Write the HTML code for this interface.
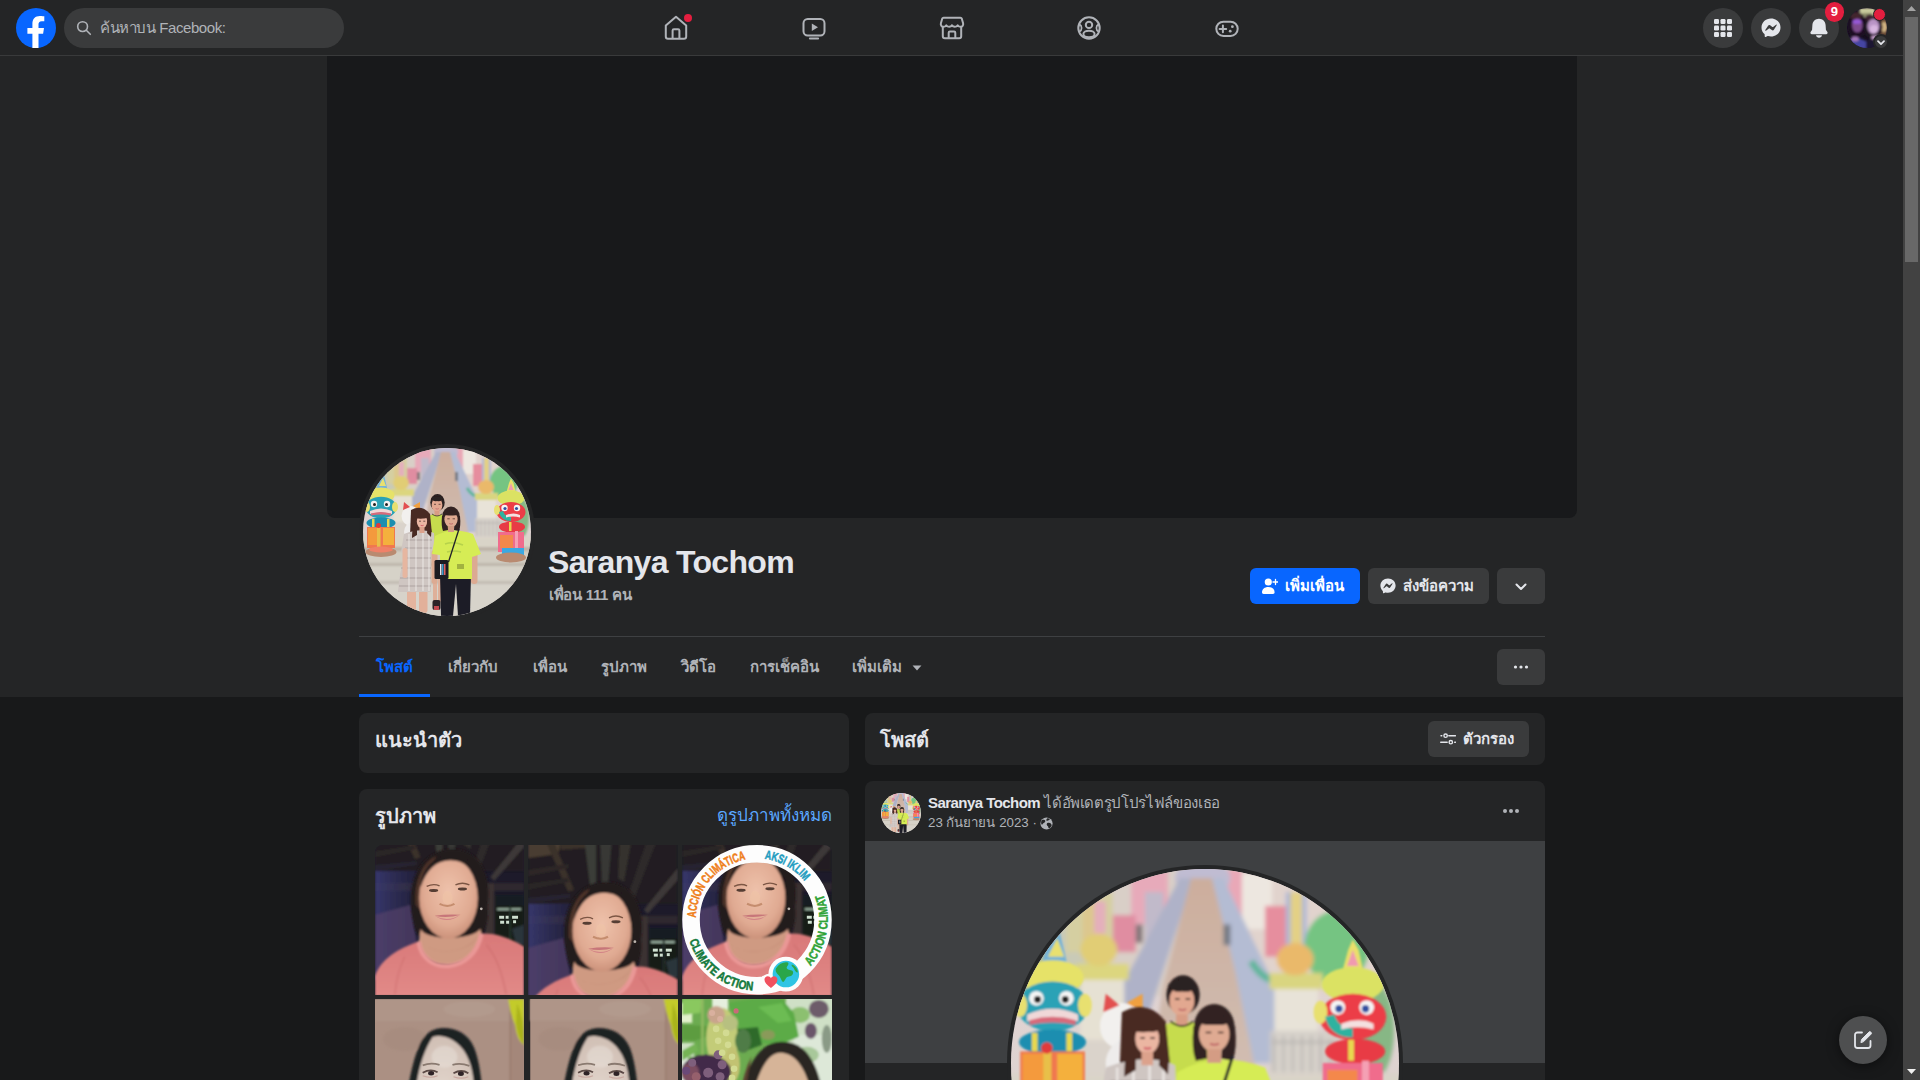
<!DOCTYPE html>
<html lang="th">
<head>
<meta charset="utf-8">
<title>Saranya Tochom | Facebook</title>
<style>
*{box-sizing:border-box;margin:0;padding:0}
html,body{width:1920px;height:1080px;overflow:hidden;background:#18191a}
body{font-family:"Liberation Sans",sans-serif;color:#e4e6eb;position:relative;font-size:15px}
.abs{position:absolute}
svg{display:block}
/* ---------- top bar ---------- */
#topbar{position:absolute;left:0;top:0;width:1903px;height:56px;background:#242526;border-bottom:1px solid #393a3b;z-index:5}
#logo{position:absolute;left:16px;top:8px;width:40px;height:40px}
#search{position:absolute;left:64px;top:8px;width:280px;height:40px;border-radius:20px;background:#3a3b3c}
#search svg{position:absolute;left:12px;top:12px}
#search span{position:absolute;left:36px;top:0;line-height:40px;font-size:15px;letter-spacing:-.42px;color:#b0b3b8;white-space:nowrap}
.navic{position:absolute;top:0;height:56px;width:130px}
.navic svg{position:absolute;left:50%;top:50%;transform:translate(-50%,-50%)}
.rbtn{position:absolute;top:8px;width:40px;height:40px;border-radius:50%;background:#3a3b3c}
.rbtn svg{position:absolute;left:10px;top:10px}
.badge{position:absolute;background:#e41e3f;border-radius:50%}
/* ---------- scrollbar ---------- */
#sb{position:absolute;left:1903px;top:0;width:17px;height:1080px;background:#424242;z-index:9}
#sb .thumb{position:absolute;left:2px;top:17px;width:13px;height:245px;background:#686868}
/* ---------- profile header ---------- */
#phead{position:absolute;left:0;top:56px;width:1903px;height:641px;background:#242526}
#cover{position:absolute;left:327px;top:0;width:1250px;height:462px;background:#18191b;border-radius:0 0 8px 8px}
#pp{position:absolute;left:359px;top:388px;width:176px;height:176px;border-radius:50%;background:#242526}
#pp svg{position:absolute;left:4px;top:4px;width:168px;height:168px;border-radius:50%}
#pname{position:absolute;left:548px;top:487px;font-size:32px;font-weight:700;line-height:38px;letter-spacing:-.68px;color:#e4e6eb;white-space:nowrap}
#pfriends{position:absolute;left:549px;top:529px;letter-spacing:-.3px;font-size:15px;font-weight:700;line-height:20px;color:#b0b3b8;white-space:nowrap}
.btn{position:absolute;height:36px;border-radius:6px;background:#3a3b3c;color:#e4e6eb;font-size:15px;font-weight:700;line-height:36px;white-space:nowrap}
.btn.blue{background:#0866ff;color:#fff}
#hr1{position:absolute;left:359px;top:580px;width:1186px;height:1px;background:#3e4042}
.tab{position:absolute;top:581px;height:60px;line-height:60px;font-size:15px;font-weight:700;color:#b0b3b8;white-space:nowrap;text-align:center}
.tab.on{color:#0866ff}
#tabline{position:absolute;left:359px;top:638px;width:71px;height:3px;background:#0866ff}
/* ---------- cards ---------- */
.card{position:absolute;background:#242526;border-radius:8px;overflow:hidden}
.h2{position:absolute;font-size:20px;font-weight:700;line-height:24px;color:#e4e6eb;white-space:nowrap}
.ph{position:absolute;width:150px;height:149.5px;overflow:hidden}
.ph svg{width:100%;height:100%}
</style>
</head>
<body>
<svg width="0" height="0" style="position:absolute">
<defs>
  <filter id="bl1" x="-5%" y="-5%" width="110%" height="110%"><feGaussianBlur stdDeviation="0.9"/></filter>
  <filter id="bl2" x="-5%" y="-5%" width="110%" height="110%"><feGaussianBlur stdDeviation="0.45"/></filter>
  <linearGradient id="gsky" x1="0" y1="0" x2="0" y2="1"><stop offset="0" stop-color="#e6d6d8"/><stop offset="1" stop-color="#d6cfc8"/></linearGradient>
  <linearGradient id="gpath" x1="0" y1="0" x2="0" y2="1"><stop offset="0" stop-color="#c7a48e"/><stop offset="1" stop-color="#cdb8aa"/></linearGradient>
  <symbol id="grp" viewBox="0 0 168 168">
    <rect width="168" height="168" fill="url(#gsky)"/>
    <g filter="url(#bl1)">
      <!-- far background colour patches -->
      <rect x="-5" y="-5" width="80" height="60" fill="#d8cfc4"/>
      <rect x="88" y="-5" width="90" height="60" fill="#e2d4cc"/>
      <rect x="0" y="20" width="40" height="40" fill="#c3c8b0"/>
      <rect x="52" y="0" width="16" height="24" fill="#ea9fb4"/>
      <rect x="44" y="20" width="10" height="16" fill="#e07a94"/>
      <rect x="24" y="10" width="20" height="26" fill="#d3cf94"/>
      <rect x="31" y="12" width="7" height="22" fill="#dcc47c"/><rect x="36" y="14" width="5" height="14" fill="#e6a6b6"/><rect x="58" y="10" width="8" height="30" fill="#b9b4c8"/>
      <rect x="99" y="2" width="14" height="24" fill="#f1ede4"/>
      <rect x="90" y="0" width="10" height="22" fill="#ec9db0"/>
      <rect x="110" y="16" width="10" height="22" fill="#e87c90"/>
      <rect x="119" y="10" width="9" height="32" fill="#9fb0d8"/>
      <rect x="121" y="10" width="5" height="32" fill="#e4d070"/>
      <ellipse cx="141" cy="34" rx="14" ry="16" fill="#56c06c"/>
      <ellipse cx="156" cy="70" rx="10" ry="22" fill="#6fb070"/>
      <ellipse cx="10" cy="40" rx="12" ry="14" fill="#9fb890"/>
      <ellipse cx="83" cy="4" rx="12" ry="8" fill="#b8b6d2"/>
      <!-- bridge -->
      <polygon points="73,4 79,4 60,62 44,58" fill="#a2aac6"/>
      <polygon points="86,4 92,4 114,50 116,84 104,84 96,44" fill="#a8b6d4"/>
      <polygon points="78,4 87,4 97,44 106,88 60,88 66,50" fill="url(#gpath)"/>
      <path d="M104 40 q6 10 14 8" stroke="#3cae8c" stroke-width="3" fill="none"/>
      <rect x="92" y="24" width="3" height="9" fill="#58606e"/>
      <rect x="54" y="24" width="3" height="8" fill="#6a5a60"/>
      <!-- pillars -->
      <rect x="30" y="42" width="19" height="48" fill="#e8e6d4"/>
      <rect x="28" y="41" width="23" height="7" fill="#dcd868"/>
      <ellipse cx="38" cy="35" rx="8" ry="7" fill="#e2cc5c"/>
      <rect x="114" y="46" width="19" height="44" fill="#ebe8da"/>
      <rect x="112" y="45" width="23" height="7" fill="#d8d66a"/>
      <ellipse cx="123" cy="39" rx="8" ry="7" fill="#eeb24e"/>
      <!-- fences -->
      <rect x="112" y="70" width="30" height="20" fill="#cfcdc4" opacity=".8"/>
      <rect x="30" y="74" width="18" height="16" fill="#d4d0c6" opacity=".8"/>
      <path d="M114 72v18M118 72v18M122 72v18M126 72v18M130 72v18M134 72v18M138 74v16M113 75h28" stroke="#a9a8a4" stroke-width=".8" fill="none"/>
      <!-- ground -->
      <rect x="-5" y="88" width="180" height="85" fill="#d9d4c8"/>
      <rect x="-5" y="99" width="180" height="4" fill="#bdb4a8"/>
      <rect x="-5" y="103" width="180" height="12" fill="#d2cdc2"/>
      <rect x="-5" y="115" width="180" height="3" fill="#beb7ac"/>
      <rect x="-5" y="118" width="180" height="15" fill="#d6d2c8"/>
      <rect x="-5" y="133" width="180" height="3" fill="#c2bcb2"/>
      <rect x="-5" y="136" width="180" height="40" fill="#d7d3ca"/>
      <rect x="-5" y="-5" width="180" height="95" fill="#ddd0d2" opacity=".22"/>
    </g>
    <g filter="url(#bl2)">
      <!-- cat -->
      <ellipse cx="48" cy="68" rx="9.5" ry="10" fill="#f2f0ee"/>
      <ellipse cx="50" cy="84" rx="9" ry="10" fill="#eeeceb"/>
      <polygon points="40,62 41,54 47,59" fill="#e25050"/>
      <polygon points="50,58 57,54 57,62" fill="#f0a040"/>
      <!-- left giant -->
      <polygon points="13,44 16,30 21,27 25,44" fill="#74b2d8"/>
      <polygon points="16,38 20,30 23,38" fill="#e8e070"/>
      <ellipse cx="18" cy="47" rx="13.5" ry="7.5" fill="#e6e268"/>
      <ellipse cx="18" cy="59.5" rx="15.5" ry="10.8" fill="#2aa2b6"/>
      <ellipse cx="4" cy="59" rx="3" ry="5" fill="#e8e070"/>
      <ellipse cx="32" cy="59" rx="3" ry="5" fill="#e8e070"/>
      <circle cx="11" cy="56" r="3.2" fill="#f4f4f4"/><circle cx="24" cy="56" r="3.2" fill="#f4f4f4"/>
      <circle cx="11.5" cy="56.5" r="1.5" fill="#222"/><circle cx="23.5" cy="56.5" r="1.5" fill="#222"/>
      <path d="M7 63 q11 -5 22 0 l0 3 q-11 -3 -22 0z" fill="#f0d8d8"/>
      <path d="M8 65.5 q10 -3 20 0 l0 2 q-10 -2 -20 0z" fill="#d86a7a"/>
      <ellipse cx="18" cy="75" rx="14.5" ry="5.5" fill="#1f8eb0"/>
      <rect x="9" y="71" width="2.5" height="8" fill="#e8d850"/><rect x="24" y="71" width="2.5" height="8" fill="#e8d850"/>
      <rect x="4" y="79" width="28" height="21" fill="#f07850"/>
      <rect x="5" y="80" width="11" height="17" fill="#f49a3c"/><rect x="20" y="80" width="11" height="17" fill="#f4b03c"/>
      <rect x="14" y="79" width="3.5" height="22" fill="#e8c048"/>
      <circle cx="15.5" cy="77.5" r="2.5" fill="#e23a3a"/>
      <ellipse cx="18" cy="104" rx="15.5" ry="5" fill="#b98a70"/>
      <ellipse cx="18" cy="101.5" rx="12" ry="3" fill="#f08068"/>
      <!-- right giant -->
      <polygon points="143,46 146,35 148,30.5 150.5,35 153,46" fill="#eadf6a"/>
      <polygon points="145.5,42 148,35 150.5,42" fill="#f09ab0"/>
      <ellipse cx="148" cy="50" rx="13.5" ry="7.5" fill="#dbe264"/>
      <ellipse cx="148" cy="64" rx="14.5" ry="10" fill="#ec3e46"/>
      <ellipse cx="134" cy="62" rx="3" ry="5" fill="#e8e070"/>
      <circle cx="141.5" cy="60" r="3.2" fill="#f4f4f4"/><circle cx="154" cy="60" r="3.2" fill="#f4f4f4"/>
      <circle cx="142" cy="60.5" r="1.6" fill="#3050a0"/><circle cx="153.5" cy="60.5" r="1.6" fill="#3050a0"/>
      <path d="M136 64 q2 9 12 9 l0 -4 q-6 0 -8 -6z" fill="#2fb2a0"/>
      <path d="M143 67 q8 -3 14 0 l0 2.5 q-7 -2 -14 0z" fill="#f4e0e0"/>
      <ellipse cx="149" cy="79" rx="13" ry="5.5" fill="#e83a44"/>
      <rect x="146" y="74" width="2.5" height="9" fill="#e8d850"/>
      <rect x="135" y="84" width="26" height="20" fill="#f06c8c"/>
      <rect x="137" y="87" width="13" height="13" fill="#f4884c"/>
      <rect x="152" y="83" width="3" height="24" fill="#f4a0b4"/>
      <rect x="139" y="100" width="22" height="7" fill="#3aa8e2"/>
      <ellipse cx="148" cy="109.5" rx="15" ry="5" fill="#b98a70"/>
    </g>
    <g filter="url(#bl2)">
      <!-- back girl -->
      <rect x="70" y="128" width="4" height="26" fill="#deb09a"/><rect x="75" y="128" width="4" height="26" fill="#deb09a"/>
      <rect x="69.5" y="152" width="8" height="10" rx="2" fill="#2a2226"/><rect x="71" y="158" width="5" height="4" fill="#c04a50"/>
      <path d="M62 70 q12 -8 24 0 l2 22 l-24 4z" fill="#c6dc4e"/>
      <ellipse cx="74.5" cy="54.5" rx="7.2" ry="8.5" fill="#2c2020"/>
      <ellipse cx="74" cy="57" rx="5.4" ry="6.6" fill="#e2a890"/>
      <path d="M68 50 q6 -4 12 0 q-1 4 -6 3 q-4 1 -6 -3z" fill="#2c2020"/>
      <rect x="71.5" y="63" width="5" height="5" fill="#d89c84"/>
      <path d="M69 66 q5 4 10 0" stroke="#222" stroke-width=".7" fill="none"/>
      <path d="M71 56.3h2M75.6 56.3h2" stroke="#3a2622" stroke-width=".7"/><path d="M72.6 60.6q1.6 1 3.2 0" stroke="#c06868" stroke-width=".8" fill="none"/>
      <!-- left girl -->
      <rect x="44" y="138" width="9" height="27" rx="3" fill="#e4b49e"/><rect x="56" y="138" width="8.5" height="27" rx="3" fill="#e2b09a"/>
      <path d="M48 62 q11 -6 19 4 l2 20 l-22 2z" fill="#4a2a24"/>
      <path d="M41 86 q18 -7 30 -1 l1 18 l-4 1 l0 40 l-33 0 q1 -20 8 -38 l-5 -2z" fill="#cfc6c2"/>
      <path d="M43 92 h26 M42 100 h27 M40 110 h28 M38 120 h30 M37 130 h31 M36 138 h32" stroke="#8a807e" stroke-width=".9" opacity=".55"/>
      <path d="M46 86 v57 M53 85 v58 M60 85 v58 M66 86 v57" stroke="#f2eeec" stroke-width="1.2" opacity=".7"/>
      <rect x="39.5" y="100" width="5" height="30" rx="2.5" fill="#e6b6a0"/>
      <ellipse cx="59" cy="73.5" rx="5.2" ry="6.6" fill="#ebb6a2"/>
      <path d="M53 70 q5 -7 12 -2 q-1 3 -5 2.5 q-4 .5 -7 -.5z" fill="#4a2a24"/>
      <path d="M50 76 q-1 10 -1 14 l5 -3 q0 -6 0 -12z M66 72 q3 8 2 17 l-4 -4 q1 -6 -0 -12z" fill="#4a2a24"/>
      <rect x="56.5" y="79" width="5" height="6" fill="#dca28c"/>
      <path d="M56 73.2h2M60.3 73.2h2" stroke="#3a2622" stroke-width=".7"/><path d="M57.6 77.3q1.5 .9 3 0" stroke="#d05a66" stroke-width=".9" fill="none"/>
      <!-- right woman -->
      <path d="M77 126 h31 l-1 42 h-12 l-2 -32 l-3 32 h-12z" fill="#1c1c26"/>
      <rect x="68.5" y="102" width="6" height="34" rx="3" fill="#dcaa92"/><rect x="108" y="102" width="6.5" height="34" rx="3" fill="#dcaa92"/>
      <path d="M72 88 q17 -10 38 -2 l8 20 l-9 3 l0 22 l-32 0 l0 -24 l-8 -1z" fill="#d6ec54"/>
      <path d="M82 96 q8 -3 18 1 M84 104 q7 -2 14 0" stroke="#a8c848" stroke-width="1.5" fill="none" opacity=".7"/>
      <ellipse cx="88" cy="68.5" rx="8.8" ry="10" fill="#302422"/>
      <path d="M79 68 q-1 10 1 15 l5 -1 l-1 -14z M97 68 q1 10 -1 15 l-5 -1 l1 -14z" fill="#302422"/>
      <ellipse cx="88" cy="71.5" rx="6.6" ry="7.8" fill="#dfaa92"/>
      <path d="M81 66 q7 -7 14 0 q-2 2 -7 1.5 q-5 .5 -7 -1.5z" fill="#302422"/>
      <rect x="85" y="78" width="6" height="6" fill="#d49c84"/>
      <path d="M84.3 70.8h2.4M89.6 70.8h2.4" stroke="#3a2622" stroke-width=".7"/><path d="M86.2 75.6q1.9 1 3.8 0" stroke="#c06868" stroke-width=".9" fill="none"/>
      <path d="M96 81 L85.5 114" stroke="#20202a" stroke-width="1.3"/>
      <rect x="71.5" y="112" width="14" height="19" rx="1.5" fill="#1a1a22"/>
      <rect x="77" y="116" width="1.5" height="11" fill="#e8e8f0"/><rect x="79" y="116" width="1.5" height="11" fill="#40a0d0"/><rect x="81" y="116" width="1.5" height="11" fill="#e06060"/>
      <rect x="94" y="116" width="7" height="5" fill="#8a9a38" opacity=".7"/>
    </g>
  </symbol>
</defs>
</svg>


<svg width="0" height="0" style="position:absolute">
<defs>
  <filter id="bl3" x="-5%" y="-5%" width="110%" height="110%"><feGaussianBlur stdDeviation="1.1"/></filter>
  <filter id="bl5" x="-10%" y="-10%" width="120%" height="120%"><feGaussianBlur stdDeviation="0.9"/></filter>
  <filter id="bl4" x="-5%" y="-5%" width="110%" height="110%"><feGaussianBlur stdDeviation="2.2"/></filter>
  <linearGradient id="ghaze" x1="0" y1="0" x2="1" y2="0"><stop offset="0" stop-color="#3a3a72" stop-opacity=".9"/><stop offset="1" stop-color="#2c2c5c" stop-opacity="0"/></linearGradient>
  <radialGradient id="gface" cx=".5" cy=".42" r=".6"><stop offset="0" stop-color="#eec2ab"/><stop offset=".7" stop-color="#e0aa92"/><stop offset="1" stop-color="#c98f78"/></radialGradient>
  <radialGradient id="gface2" cx=".5" cy=".6" r=".7"><stop offset="0" stop-color="#e6dad1"/><stop offset="1" stop-color="#cdbbb0"/></radialGradient>
  <linearGradient id="gshirt" x1="0" y1="0" x2="0" y2="1"><stop offset="0" stop-color="#d87878"/><stop offset="1" stop-color="#e28a88"/></linearGradient>

  <!-- woman in pink shirt under dark wooden roof (canvas x:0..15, y:-40..15) -->
  <g id="wpink">
    <rect x="0" y="-40" width="150" height="190" fill="#1d1a2a"/>
    <g filter="url(#bl3)">
      <rect x="0" y="-40" width="150" height="66" fill="#231f20"/>
      <polygon points="0,-40 34,-40 30,-24 0,-20" fill="#4a3c30"/>
      <polygon points="34,-40 60,-40 58,-30 32,-28" fill="#3a302a"/>
      <polygon points="56,-40 68,-40 68,6 62,8" fill="#3b3d38"/>
      <polygon points="72,-40 84,-40 80,8 74,6" fill="#373934"/>
      <polygon points="92,-40 104,-40 96,4 90,0" fill="#34322e"/>
      <polygon points="16,-40 24,-40 46,12 40,14" fill="#3a302c"/>
      <polygon points="120,-40 130,-40 106,22 100,18" fill="#2f2b2a"/>
      <polygon points="150,-10 150,2 120,36 116,32" fill="#3c3838"/>
      <polygon points="0,-8 40,-14 40,-10 0,-2" fill="#2e2828"/>
      <polygon points="0,6 40,0 40,4 0,12" fill="#2a2526"/>
      <polygon points="0,20 42,16 42,20 0,26" fill="#272430"/>
      <rect x="0" y="38" width="150" height="8" fill="#332c30" opacity=".8"/>
      <rect x="111" y="38" width="9" height="80" fill="#3a3331"/>
      <rect x="0" y="26" width="62" height="110" fill="url(#ghaze)"/>
      <polygon points="0,70 36,60 44,112 0,134" fill="#54426a" opacity=".7"/>
      <rect x="121" y="50" width="29" height="55" fill="#151a20"/>
      <rect x="121" y="61" width="29" height="42" fill="#131b18"/>
      <rect x="123" y="63.5" width="24" height="1.8" fill="#a9c2b0"/>
      <rect x="135" y="61" width="2" height="42" fill="#26302c"/>
      <polygon points="138,84 150,80 150,100 142,100" fill="#2a343a"/>
    </g>
    <g fill="#cfe0d0" filter="url(#bl2)"><rect x="125" y="71" width="5" height="3"/><rect x="131.5" y="71" width="3" height="3"/><rect x="138" y="71" width="6" height="3"/><rect x="126" y="76" width="4" height="3"/><rect x="132" y="76" width="3" height="3"/><rect x="139" y="75.5" width="3" height="3"/></g>
    <g filter="url(#bl3)">
      <path d="M38 74 C30 34 48 4 78 4 C106 4 118 30 113 62 C115 78 110 90 102 94 L48 94 C40 90 40 82 38 74z" fill="#241a1b"/>
      <path d="M41 60 C39 36 49 15 62 11 C52 24 49 44 49 70z" fill="#5a3c30" opacity=".8"/>
      <path d="M46 84 C50 96 98 96 106 84 L108 92 C100 128 48 130 44 98z" fill="#cf9a82"/>
      <ellipse cx="74" cy="53" rx="29.5" ry="41" fill="url(#gface)"/>
      <path d="M46 42 C48 20 62 9 80 10 C94 11 103 22 104 38 C98 24 90 15 76 15 C62 15 52 24 46 42z" fill="#241a1b"/>
      <path d="M46 96 C56 112 94 110 104 90 C100 100 88 106 72 107 C58 107 50 102 46 96z" fill="#b8826c" opacity=".7"/>
    </g>
    <g filter="url(#bl2)" opacity=".85">
      <path d="M52 41.5 q7 -3.5 13 -.5" stroke="#6a4636" stroke-width="1.4" fill="none"/>
      <path d="M81 40 q7 -3.5 14 0" stroke="#6a4636" stroke-width="1.4" fill="none"/>
      <ellipse cx="59" cy="45.5" rx="4.6" ry="1.5" fill="#3e2a24"/>
      <ellipse cx="88" cy="44" rx="4.6" ry="1.5" fill="#3e2a24"/>
      <path d="M65 59 q8 4 15 0" stroke="#bf8666" stroke-width="2.2" fill="none"/>
      <ellipse cx="73" cy="53" rx="5" ry="7" fill="#efc4a6" opacity=".7"/>
      <path d="M60 71 q13 7 26 -1 q-13 10 -26 1z" fill="#d07c84"/>
      <path d="M60 71 q13 -2 26 -1 q-13 4 -26 1z" fill="#c26c74"/>
      <circle cx="107" cy="64" r="1.4" fill="#d8d0c8"/>
    </g>
    <g filter="url(#bl3)">
      <path d="M0 132 C6 114 24 104 44 97 C48 132 100 130 107 89 C124 88 140 96 150 102 V152 H0z" fill="url(#gshirt)"/>
      <path d="M44 97 C48 132 100 130 107 89" stroke="#ea9896" stroke-width="4.5" fill="none"/>
      <path d="M112 100 q14 16 20 50" stroke="#cf7070" stroke-width="2" fill="none" opacity=".6"/>
      <path d="M30 112 q-8 16 -10 38" stroke="#cf7070" stroke-width="2" fill="none" opacity=".5"/>
    </g>
  </g>

  <!-- pale woman with black hair in front of brownish wall (canvas 150x150, only top 82 visible) -->
  <g id="wpale">
    <rect width="150" height="150" fill="#ab9083"/>
    <g filter="url(#bl3)">
      <rect x="0" y="0" width="150" height="22" fill="#af9588"/>
      <ellipse cx="95" cy="10" rx="26" ry="8" fill="#b49c90" opacity=".7"/>
      <ellipse cx="30" cy="40" rx="22" ry="12" fill="#a58a7e" opacity=".7"/>
      <rect x="135.5" y="0" width="1.5" height="150" fill="#98796c"/>
      <rect x="137" y="0" width="14" height="150" fill="#a4877a"/>
      <path d="M134 0 h16 v46 q-7 -4 -9 -20 q-5 -12 -7 -26z" fill="#c3cb2c"/>
      <path d="M143 4 q6 14 7 30 v12 q-6 -6 -8 -22z" fill="#aab31e"/>
      <path d="M29 150 C29 112 34 72 44 48 C50 33 60 29 69 29 C83 29 94 36 99 47 C107 64 110 100 110 150z" fill="#1f2023"/>
      <path d="M37 150 C38 102 42 62 58 38 C63 36 71 37 78 41 C90 48 97 62 99 80 C101 100 100 120 100 150z" fill="url(#gface2)"/>
      <ellipse cx="70" cy="58" rx="13" ry="11" fill="#ece5de" opacity=".45"/>
    </g>
    <g filter="url(#bl2)">
      <path d="M48 66.5 q8 -3 17 -.5" stroke="#8a7a70" stroke-width="1.8" fill="none"/>
      <path d="M78 66 q8 -2.5 17 1" stroke="#8a7a70" stroke-width="1.8" fill="none"/>
      <path d="M48 74 q8 -4.5 15 -.5" stroke="#5a4844" stroke-width="1.8" fill="none"/>
      <path d="M79 74.5 q8 -4.5 15 0" stroke="#5a4844" stroke-width="1.8" fill="none"/>
      <ellipse cx="56.5" cy="74.5" rx="3" ry="2.2" fill="#2e2426"/><ellipse cx="86.5" cy="75" rx="3" ry="2.2" fill="#2e2426"/>
      <path d="M48 77 q8 3 15 0" stroke="#c8a8a0" stroke-width="1.2" fill="none"/>
      <path d="M79 78 q8 3 15 0" stroke="#c8a8a0" stroke-width="1.2" fill="none"/>
    </g>
  </g>

  <!-- grapes + leaves + top of head -->
  <g id="grapes">
    <rect width="150" height="150" fill="#6cab50"/>
    <g filter="url(#bl3)">
      <rect x="104" y="-4" width="54" height="100" fill="#cfe0c6"/>
      <rect x="112" y="36" width="46" height="50" fill="#dde8d8"/>
      <rect x="-4" y="4" width="14" height="20" fill="#e2f0cc"/><rect x="-4" y="56" width="10" height="30" fill="#dfe8dc"/>
      <rect x="30" y="-4" width="16" height="16" fill="#e6efde"/>
      <rect x="-4" y="44" width="16" height="14" fill="#cfe2c4"/>
      <ellipse cx="137" cy="10" rx="10" ry="9" fill="#6d5c6a"/>
      <ellipse cx="129" cy="32" rx="6" ry="8" fill="#6a566a"/>
      <ellipse cx="118" cy="16" rx="10" ry="8" fill="#8cc070"/>
      <ellipse cx="145" cy="40" rx="5" ry="14" fill="#8a9a86"/>
      <ellipse cx="125" cy="56" rx="12" ry="8" fill="#a8c89a"/>
      <polygon points="0,0 20,0 18,14 0,16" fill="#8ac85e"/>
      <polygon points="46,4 70,0 100,0 112,14 117,38 98,46 78,44 58,30" fill="#5bab46"/>
      <polygon points="76,8 100,4 110,22 96,24" fill="#6cbc52"/>
      <polygon points="55,30 76,28 80,46 64,52 54,44" fill="#2f6a2b"/>
      <polygon points="0,26 26,27 30,36 12,42 0,41" fill="#5d9c40"/>
      <polygon points="0,52 14,44 16,52 0,62" fill="#74b454"/>
      <rect x="19" y="0" width="2.5" height="70" fill="#93ba62"/>
      <ellipse cx="40" cy="40" rx="16" ry="31" fill="#c3cc78"/>
      <ellipse cx="34" cy="16" rx="9" ry="9" fill="#c9a48c"/>
      <ellipse cx="48" cy="24" rx="8" ry="8" fill="#b7c080"/>
      <ellipse cx="50" cy="66" rx="8" ry="18" fill="#c2c272"/>
      <ellipse cx="61" cy="42" rx="8" ry="12" fill="#4f7c46"/>
      <ellipse cx="24" cy="73" rx="25" ry="17" fill="#432c48"/>
      <ellipse cx="8" cy="74" rx="9" ry="10" fill="#7c4e60"/>
      <ellipse cx="86" cy="36" rx="7" ry="5" fill="#8a9a5a"/>
      <path d="M51 150 C54 92 68 43 100 43 C128 43 144 70 146 150z" fill="#2a2623"/>
      <path d="M54 150 C55 100 62 70 70 58 C64 78 62 110 64 150z" fill="#5a4030"/>
      <path d="M64 150 C66 96 80 54 98 54 C118 54 134 80 135 150z" fill="#d6b498"/>
    </g>
    <g filter="url(#bl2)" fill="#7e5e7c">
      <circle cx="10" cy="64" r="4"/><circle cx="36" cy="56" r="4.5"/><circle cx="40" cy="66" r="4.5"/><circle cx="26" cy="74" r="5"/><circle cx="38" cy="78" r="4.5"/><circle cx="14" cy="78" r="4.5" fill="#96606c"/><circle cx="4" cy="72" r="4" fill="#6a4a78"/>
    </g>
    <g filter="url(#bl2)" fill="#d3db92">
      <circle cx="34" cy="30" r="3.3"/><circle cx="44" cy="34" r="3.3"/><circle cx="36" cy="42" r="3.3"/><circle cx="46" cy="46" r="3.3"/><circle cx="40" cy="54" r="3.3"/><circle cx="50" cy="58" r="3.3"/><circle cx="52" cy="70" r="3.3"/><circle cx="50" cy="79" r="3.3"/><circle cx="30" cy="14" r="3" fill="#d9b09e"/><circle cx="38" cy="20" r="3" fill="#d9b09e"/><circle cx="54" cy="12" r="2.6" fill="#c96a78"/>
    </g>
  </g>

  <!-- header avatar: two people, purple tint -->
  <g id="meav">
    <rect width="40" height="40" fill="#171020"/>
    <g filter="url(#bl5)">
      <rect x="12.5" y="0" width="15.5" height="9.5" fill="#c9c99c"/>
      <rect x="16" y="5" width="9" height="3" fill="#8f8f6a"/>
      <rect x="30" y="10" width="10" height="18" fill="#6a4c36"/>
      <ellipse cx="37" cy="19" rx="3.5" ry="5" fill="#d2b482"/>
      <ellipse cx="10" cy="17" rx="9.5" ry="13" fill="#1b1122"/>
      <ellipse cx="9" cy="8" rx="6" ry="4" fill="#43262e"/>
      <ellipse cx="26" cy="19" rx="9.5" ry="12" fill="#1d1320"/>
      <ellipse cx="23" cy="10" rx="5" ry="3.5" fill="#3c2230"/>
      <ellipse cx="10.3" cy="17.5" rx="5.2" ry="7" fill="#7e4c8e"/>
      <ellipse cx="10" cy="13.8" rx="4.5" ry="2.2" fill="#9658d8"/>
      <ellipse cx="26.3" cy="18.5" rx="6" ry="7.5" fill="#b994c6"/>
      <ellipse cx="27" cy="21" rx="4" ry="4" fill="#d8b6e0"/>
      <path d="M1 32 q9 -5 19 2 v10 h-19z" fill="#4444a2"/>
      <ellipse cx="8" cy="31" rx="4" ry="2.5" fill="#a676bc"/>
      <path d="M19 33 q9 -6 21 -2 v12 h-21z" fill="#1c1430"/>
      <ellipse cx="29" cy="29.5" rx="5" ry="2" fill="#c8a0cc"/>
    </g>
  </g>
</defs>
</svg>

<!-- ================= TOP BAR ================= -->
<header id="topbar">
  <div id="logo">
    <svg width="40" height="40" viewBox="0 0 40 40"><circle cx="20" cy="20" r="20" fill="#0866ff"/><path fill="#fff" transform="translate(-.7 0)" d="M27.8 25.8l.9-5.8h-5.5v-3.7c0-1.6.8-3.1 3.3-3.1H29V8.3s-2.3-.4-4.4-.4c-4.5 0-7.5 2.7-7.5 7.7V20h-5v5.8h5V40h6.1V25.8z"/></svg>
  </div>
  <div id="search">
    <svg width="16" height="16" viewBox="0 0 16 16" fill="none" stroke="#b0b3b8" stroke-width="1.6" stroke-linecap="round"><circle cx="6.6" cy="6.6" r="4.9"/><path d="M10.3 10.3l4 4"/></svg>
    <span>ค้นหาบน Facebook:</span>
  </div>
  <nav>
    <div class="navic" style="left:611px" id="n-home"><svg width="26" height="26" viewBox="0 0 26 26" fill="none" stroke="#b0b3b8" stroke-width="2" stroke-linejoin="round" style="margin-top:-0.5px"><path d="M2.8 10.4L13 1.7l10.2 8.7v11.1a2.2 2.2 0 0 1-2.2 2.2H5a2.2 2.2 0 0 1-2.2-2.2z"/><path d="M9.6 23.7v-8.2a1.3 1.3 0 0 1 1.3-1.3h4.2a1.3 1.3 0 0 1 1.3 1.3v8.2"/></svg><i class="badge" style="left:72.7px;top:13.7px;width:8.4px;height:8.4px"></i></div>
    <div class="navic" style="left:749px" id="n-watch"><svg width="26" height="26" viewBox="0 0 26 26" fill="none" stroke="#b0b3b8" stroke-width="2" stroke-linecap="round" style="margin-top:1px"><rect x="2.5" y="3" width="21" height="16.5" rx="4.2"/><path d="M8.9 22.5h8.2"/><path d="M10.8 7.6v7.3l6.2-3.65z" fill="#b0b3b8" stroke="none"/></svg></div>
    <div class="navic" style="left:887px" id="n-market"><svg width="26" height="26" viewBox="0 0 26 26" fill="none" stroke="#b0b3b8" stroke-width="2" stroke-linejoin="round"><path d="M3.8 11v10.3a2 2 0 0 0 2 2h14.4a2 2 0 0 0 2-2V11"/><path d="M4.6 2.7h16.8a1.5 1.5 0 0 1 1.4 1l1.3 4.6c.5 2-.9 3.5-2.5 3.5-1.3 0-2.2-.6-2.9-1.6-.7 1-1.7 1.6-2.9 1.6s-2.2-.6-2.8-1.6c-.6 1-1.6 1.6-2.8 1.6s-2.2-.6-2.9-1.6c-.7 1-1.6 1.6-2.9 1.6-1.6 0-3-1.5-2.5-3.5l1.3-4.6a1.5 1.5 0 0 1 1.4-1z"/><path d="M9.7 23.3v-5.5a1.2 1.2 0 0 1 1.2-1.2h4.2a1.2 1.2 0 0 1 1.2 1.2v5.5"/></svg></div>
    <div class="navic" style="left:1024px" id="n-groups"><svg width="26" height="26" viewBox="0 0 26 26" fill="none" stroke="#b0b3b8" stroke-width="2"><circle cx="13" cy="13" r="10.7"/><circle cx="13" cy="9.9" r="3.2"/><ellipse cx="13" cy="19" rx="5.6" ry="3.2"/><path d="M3.4 9.3A4.2 4.2 0 0 1 3.4 16.7M22.6 9.3A4.2 4.2 0 0 0 22.6 16.7" stroke-width="1.7"/></svg></div>
    <div class="navic" style="left:1162px" id="n-games"><svg width="26" height="26" viewBox="0 0 26 26" fill="none" stroke="#b0b3b8" stroke-width="2" stroke-linecap="round" style="margin-top:.5px"><rect x="2.3" y="5.7" width="21.4" height="14.3" rx="7.15"/><path d="M8.9 9.6v6.6M5.6 12.9h6.6"/><circle cx="18.4" cy="10.7" r="1.4" fill="#b0b3b8" stroke="none"/><circle cx="16.2" cy="15.2" r="1.4" fill="#b0b3b8" stroke="none"/></svg></div>
  </nav>
  <div class="rbtn" style="left:1703px" id="r-menu"><svg width="20" height="20" viewBox="0 0 20 20" fill="#e4e6eb"><rect x="1" y="1" width="5" height="5" rx="1.2"/><rect x="7.5" y="1" width="5" height="5" rx="1.2"/><rect x="14" y="1" width="5" height="5" rx="1.2"/><rect x="1" y="7.5" width="5" height="5" rx="1.2"/><rect x="7.5" y="7.5" width="5" height="5" rx="1.2"/><rect x="14" y="7.5" width="5" height="5" rx="1.2"/><rect x="1" y="14" width="5" height="5" rx="1.2"/><rect x="7.5" y="14" width="5" height="5" rx="1.2"/><rect x="14" y="14" width="5" height="5" rx="1.2"/></svg></div>
  <div class="rbtn" style="left:1751px" id="r-msg"><svg width="20" height="20" viewBox="0 0 20 20"><path fill="#e4e6eb" d="M10 .5C4.6.5.5 4.4.5 9.5c0 2.7 1.1 5 2.9 6.6.15.13.24.32.25.52l.05 1.65a.75.75 0 0 0 1.05.66l1.84-.81a.75.75 0 0 1 .5-.04c.93.26 1.9.39 2.91.39 5.4 0 9.5-3.9 9.5-9S15.4.5 10 .5z"/><path fill="#3a3b3c" d="M4.3 12.1l2.8-4.4a1.4 1.4 0 0 1 2.05-.38l2.2 1.66a.57.57 0 0 0 .69 0l3-2.27c.4-.3.92.18.65.6l-2.8 4.4a1.4 1.4 0 0 1-2.05.38l-2.2-1.66a.57.57 0 0 0-.69 0l-3 2.27c-.4.3-.92-.18-.65-.6z"/></svg></div>
  <div class="rbtn" style="left:1799px" id="r-bell"><svg width="20" height="20" viewBox="0 0 20 20" fill="#e4e6eb"><path d="M10 .8c-3.7 0-6.4 2.8-6.6 6.3l-.3 4.3c0 .3-.1.5-.3.8l-1.2 1.9c-.6 1 .1 2.2 1.2 2.2h14.4c1.1 0 1.8-1.2 1.2-2.2l-1.2-1.9c-.2-.3-.3-.5-.3-.8l-.3-4.3C16.4 3.6 13.7.8 10 .8z"/><path d="M7 17.3h6c-.2 1.4-1.5 2.4-3 2.4s-2.8-1-3-2.4z"/></svg><i class="badge" style="left:25.5px;top:-6px;width:19.5px;height:19.5px;color:#fff;font:700 13px/19px 'Liberation Sans',sans-serif;text-align:center;font-style:normal">9</i></div>
  <div class="rbtn" style="left:1847px;background:#3a2a4a" id="r-me"><svg viewBox="0 0 40 40" style="position:absolute;left:0;top:0;width:40px;height:40px;border-radius:50%"><use href="#meav"/></svg><i class="badge" style="left:26.1px;top:0;width:13.4px;height:13.4px;border:1.6px solid #242526"></i><i style="position:absolute;left:26px;top:26px;width:16px;height:16px;border-radius:50%;background:#3a3b3c;border:2px solid #242526"></i><svg width="8" height="6" viewBox="0 0 8 6" fill="none" stroke="#e4e6eb" stroke-width="1.7" stroke-linecap="round" stroke-linejoin="round" style="position:absolute;left:30px;top:31.5px"><path d="M1 1.2l3 3 3-3"/></svg></div>
</header>

<!-- ================= SCROLLBAR ================= -->
<div id="sb"><svg width="17" height="17" viewBox="0 0 17 17" style="position:absolute;left:0;top:0"><path d="M4 11l4.5-5 4.5 5z" fill="#a3a3a3"/></svg><div class="thumb"></div><svg width="17" height="17" viewBox="0 0 17 17" style="position:absolute;left:0;top:1063px"><path d="M4 6l4.5 5 4.5-5z" fill="#f0f0f0"/></svg></div>

<!-- ================= PROFILE HEADER ================= -->
<section id="phead">
  <div id="cover"></div>
  <div id="pp"><svg viewBox="0 0 168 168"><use href="#grp"/></svg></div>
  <h1 id="pname">Saranya Tochom</h1>
  <div id="pfriends">เพื่อน 111 คน</div>

  <div class="btn blue" style="left:1250px;top:512px;width:110px" id="b-add"><svg width="16" height="16" viewBox="0 0 16 16" fill="#fff" style="position:absolute;left:12px;top:10px"><circle cx="6.3" cy="4" r="3.6"/><path d="M0 14.3c0-3.2 2.6-5.4 6.3-5.4s6.3 2.2 6.3 5.4c0 .9-.6 1.7-1.6 1.7H1.6C.6 16 0 15.2 0 14.3z"/><path d="M13.5 1.5v5M11 4h5" stroke="#fff" stroke-width="1.3" stroke-linecap="round"/></svg><span style="position:absolute;left:35px">เพิ่มเพื่อน</span></div>
  <div class="btn" style="left:1368px;top:512px;width:121px" id="b-msg"><svg width="16" height="16" viewBox="0 0 20 20" style="position:absolute;left:12px;top:10px"><path fill="#e4e6eb" d="M10 .5C4.6.5.5 4.4.5 9.5c0 2.7 1.1 5 2.9 6.6.15.13.24.32.25.52l.05 1.65a.75.75 0 0 0 1.05.66l1.84-.81a.75.75 0 0 1 .5-.04c.93.26 1.9.39 2.91.39 5.4 0 9.5-3.9 9.5-9S15.4.5 10 .5z"/><path fill="#3a3b3c" d="M4.3 12.1l2.8-4.4a1.4 1.4 0 0 1 2.05-.38l2.2 1.66a.57.57 0 0 0 .69 0l3-2.27c.4-.3.92.18.65.6l-2.8 4.4a1.4 1.4 0 0 1-2.05.38l-2.2-1.66a.57.57 0 0 0-.69 0l-3 2.27c-.4.3-.92-.18-.65-.6z"/></svg><span style="position:absolute;left:35px">ส่งข้อความ</span></div>
  <div class="btn" style="left:1497px;top:512px;width:48px" id="b-more"><svg width="12" height="8" viewBox="0 0 12 8" fill="none" stroke="#e4e6eb" stroke-width="2" stroke-linecap="round" stroke-linejoin="round" style="position:absolute;left:18px;top:14.5px"><path d="M1.5 1.5l4.5 4.5 4.5-4.5"/></svg></div>

  <div id="hr1"></div>
  <div class="tab on" style="left:359px;width:71px">โพสต์</div>
  <div class="tab" style="left:430px;width:85px">เกี่ยวกับ</div>
  <div class="tab" style="left:515px;width:69px">เพื่อน</div>
  <div class="tab" style="left:584px;width:80px">รูปภาพ</div>
  <div class="tab" style="left:664px;width:68px">วิดีโอ</div>
  <div class="tab" style="left:732px;width:104px">การเช็คอิน</div>
  <div class="tab" style="left:836px;width:86px;text-align:left;padding-left:16px">เพิ่มเติม<svg width="10" height="6" viewBox="0 0 9 5" fill="#b0b3b8" style="position:absolute;left:76px;top:28px"><path d="M.5.3h8L4.5 4.8z"/></svg></div>
  <div id="tabline"></div>
  <div class="btn" style="left:1497px;top:593px;width:48px" id="b-dots"><svg width="16" height="4" viewBox="0 0 16 4" fill="#e4e6eb" style="position:absolute;left:16px;top:16px"><circle cx="2.5" cy="2" r="1.6"/><circle cx="8" cy="2" r="1.6"/><circle cx="13.5" cy="2" r="1.6"/></svg></div>
</section>

<!-- ================= LEFT COLUMN ================= -->
<section class="card" style="left:359px;top:713px;width:490px;height:60px">
  <div class="h2" style="left:16px;top:15px">แนะนำตัว</div>
</section>

<section class="card" style="left:359px;top:789px;width:490px;height:400px" id="photos">
  <div class="h2" style="left:16px;top:15px">รูปภาพ</div>
  <div class="abs" style="right:17px;top:16px;font-size:17px;line-height:22px;color:#5aa7ff;white-space:nowrap">ดูรูปภาพทั้งหมด</div>

  <div class="ph" style="left:16px;top:56px;width:149px;border-radius:8px 0 0 0"><svg viewBox="0 0 150 150"><use href="#wpink"/></svg></div>
  <div class="ph" style="left:169px;top:56px"><svg viewBox="0 -33 150 150"><use href="#wpink"/></svg></div>
  <div class="ph" style="left:323px;top:56px;border-radius:0 8px 0 0" id="ph3"><svg viewBox="0 0 150 150"><use href="#wpink"/>
    <defs><path id="arcU" d="M13.5 75A61.5 61.5 0 0 1 136.5 75"/><path id="arcL" d="M4 75A71 71 0 1 0 75 4"/></defs>
    <circle cx="75" cy="75" r="66.2" fill="none" stroke="#fdfdfd" stroke-width="17.6"/>
    <circle cx="104" cy="129.5" r="17.5" fill="#fdfdfd"/>
    <path d="M80 132 q9 -6 16 0 v12 h-16z" fill="#fdfdfd"/>
    <g font-family="'Liberation Sans',sans-serif" font-weight="700" font-size="12.5" stroke-width=".5" paint-order="stroke">
      <text fill="#ef7f1a" stroke="#ef7f1a"><textPath href="#arcU" startOffset="2" textLength="83" lengthAdjust="spacingAndGlyphs">ACCIÓN CLIMÁTICA</textPath></text>
      <text fill="#1f9cc0" stroke="#1f9cc0"><textPath href="#arcU" startOffset="104" textLength="47" lengthAdjust="spacingAndGlyphs">AKSI IKLIM</textPath></text>
      <text fill="#147a3c" stroke="#147a3c"><textPath href="#arcL" startOffset="21" textLength="86" lengthAdjust="spacingAndGlyphs">CLIMATE ACTION</textPath></text>
      <text fill="#2fa336" stroke="#2fa336"><textPath href="#arcL" startOffset="172" textLength="77" lengthAdjust="spacingAndGlyphs">ACTION CLIMAT</textPath></text>
    </g>
    <circle cx="104" cy="129.5" r="13.3" fill="#2fc4e4"/>
    <path d="M94 124c3-5 8-7 12-6 2 2-2 4-1 6s5 1 6 3-1 5-4 5-3 3-5 5-3-4-5-6-4-4-3-7zM110 120c3 1 6 4 6 8-2 0-3-2-4-4s-3-2-2-4z" fill="#2aa64a"/>
    <path d="M89 143.5c-4-3-6.5-5.5-6.5-8.3 0-2 1.5-3.4 3.3-3.4 1.3 0 2.5.7 3.2 1.8.7-1.1 1.9-1.8 3.2-1.8 1.8 0 3.3 1.4 3.3 3.4 0 2.8-2.5 5.3-6.5 8.3z" fill="#f0515f"/>
  </svg></div>
  <div class="ph" style="left:16px;top:210px;width:149px"><svg viewBox="0 0 150 150"><use href="#wpale"/></svg></div>
  <div class="ph" style="left:169px;top:210px"><svg viewBox="0 0 150 150"><use href="#wpale" transform="translate(2,0)"/></svg></div>
  <div class="ph" style="left:323px;top:210px"><svg viewBox="0 0 150 150"><use href="#grapes"/></svg></div>
</section>

<!-- ================= RIGHT COLUMN ================= -->
<section class="card" style="left:865px;top:713px;width:680px;height:52px">
  <div class="h2" style="left:15px;top:15px">โพสต์</div>
  <div class="btn" style="left:563px;top:8px;width:101px" id="b-filter"><svg width="16" height="16" viewBox="0 0 16 16" fill="none" stroke="#e4e6eb" stroke-width="1.4" stroke-linecap="round" style="position:absolute;left:12px;top:10px"><path d="M1 4.7h.8M8.8 4.7h6.7M.7 11.2h6.5M14.7 11.2h.8"/><circle cx="5.6" cy="4.7" r="1.7"/><circle cx="10.8" cy="11.2" r="1.7"/></svg><span style="position:absolute;left:35px">ตัวกรอง</span></div>
</section>

<article class="card" style="left:865px;top:781px;width:680px;height:400px" id="post">
  <div class="abs" style="left:16px;top:12px;width:40px;height:40px;border-radius:50%;overflow:hidden" id="post-av"><svg width="40" height="40" viewBox="0 0 168 168"><use href="#grp"/></svg></div>
  <div class="abs" style="left:63px;top:12px;font-size:15px;line-height:20px;white-space:nowrap"><b style="letter-spacing:-.55px">Saranya Tochom</b> <span style="color:#b0b3b8;letter-spacing:-.35px">ได้อัพเดตรูปโปรไฟล์ของเธอ</span></div>
  <div class="abs" style="left:63px;top:34px;font-size:13.3px;line-height:16px;color:#b0b3b8;white-space:nowrap">23 กันยายน 2023 ·<svg width="13" height="13" viewBox="0 0 16 16" style="position:absolute;left:112px;top:2px"><circle cx="8" cy="8" r="7.5" fill="#b0b3b8"/><path fill="#242526" d="M3 3.5c1.5-.5 3 0 3.5 1S5.5 7 4.5 7.5 3 9.5 2.5 9.5 1.2 8 1.4 6.5 2 4 3 3.5zM8.5 2c1-.6 2.7-.3 3.3.5s-.5 1.5-1.3 1.6S8.7 5.3 8.2 4.6 7.7 2.5 8.5 2zM9 7.5c1.2-.8 3.3-.6 4.3.4s1.4 2.6.7 3.4-1.5 2.2-2.5 2.6-1.3-1-1.4-2-1.4-1.2-1.7-2.2.2-1.8.6-2.2z"/></svg></div>
  <svg width="20" height="6" viewBox="0 0 20 6" fill="#b0b3b8" style="position:absolute;left:636px;top:27px"><circle cx="4" cy="3" r="2"/><circle cx="10" cy="3" r="2"/><circle cx="16" cy="3" r="2"/></svg>
  <div class="abs" style="left:0;top:60px;width:680px;height:222px;background:#3e4042"></div>
  <div class="abs" style="left:142px;top:84px;width:396px;height:396px;border-radius:50%;background:#242526" id="post-pp"><svg viewBox="0 0 168 168" style="position:absolute;left:4px;top:4px;width:388px;height:388px;border-radius:50%"><use href="#grp"/></svg></div>
</article>

<!-- floating compose button -->
<div class="abs" style="left:1839px;top:1016px;width:48px;height:48px;border-radius:50%;background:#4e4f50;box-shadow:0 2px 12px rgba(0,0,0,.5)" id="fab"><svg width="20" height="20" viewBox="0 0 20 20" fill="none" stroke="#e4e6eb" stroke-width="1.8" stroke-linecap="round" stroke-linejoin="round" style="position:absolute;left:14px;top:14px"><path d="M9 2.5H4.5a2.5 2.5 0 0 0-2.5 2.5v10.5A2.5 2.5 0 0 0 4.5 18H15a2.5 2.5 0 0 0 2.5-2.5V11"/><path d="M8 12.2l.6-2.8 7.3-7.3a1.3 1.3 0 0 1 1.9 0l.2.2a1.3 1.3 0 0 1 0 1.9L10.7 11.5z" fill="#e4e6eb" stroke-width="1"/></svg></div>

</body>
</html>
